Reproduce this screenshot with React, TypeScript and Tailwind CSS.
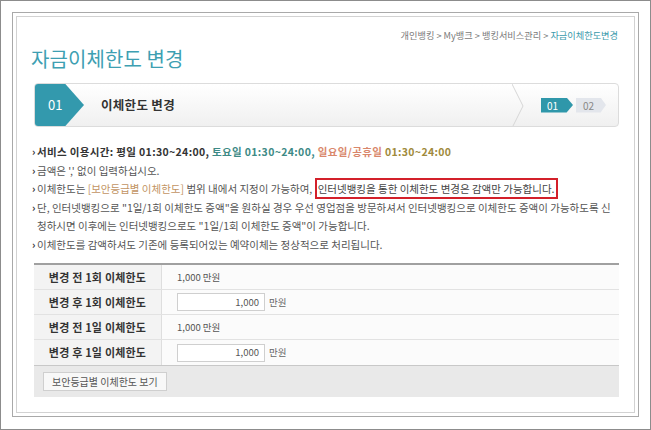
import React from "react";

const font = { fontFamily: "'Noto Sans CJK KR', 'Noto Sans', sans-serif" };

function Bullet({ children, className = "" }: { children: React.ReactNode; className?: string }) {
  return (
    <div className={"flex " + className}>
      <span className="w-[5px] shrink-0 text-[#333] font-bold">›</span>
      <div className="flex-1">{children}</div>
    </div>
  );
}

function Row({ label, children, last = false }: { label: string; children: React.ReactNode; last?: boolean }) {
  return (
    <div className={"flex h-[25px] " + (last ? "" : "border-b border-[#e2e2e2]")}>
      <div className="w-[128px] shrink-0 bg-[#f3f3f3] border-r border-[#dedede] flex items-center justify-center text-[11px] font-bold text-[#333] tracking-[0.2px]">
        {label}
      </div>
      <div className="flex-1 bg-[#fbfbfb] flex items-center pl-[15px] text-[9.5px] text-[#555]">{children}</div>
    </div>
  );
}

function InputCell() {
  return (
    <div className="flex items-center">
      <div className="w-[88px] h-[18px] border border-[#cfcfcf] bg-white flex items-center justify-end pr-[5px] text-[9.5px] text-[#555]">
        1,000
      </div>
      <span className="ml-[4px] text-[9.5px] text-[#666]">만원</span>
    </div>
  );
}

export default function App() {
  return (
    <div style={font} className="w-[651px] h-[430px] bg-white border border-[#8c8c8c] p-[11px]">
      <div className="h-[405px] border border-[#a9a9a9] p-[3px]">
        <div className="h-[397px] border border-[#d2d2d2] pl-[17px] pr-[15px] pt-[12px]">
          <div className="text-right text-[9.2px] leading-[12px] text-[#7a7a7a] pr-[1px]">
            개인뱅킹 &gt; My뱅크 &gt; 뱅킹서비스관리 &gt; <span className="text-[#3a9aab]">자금이체한도변경</span>
          </div>
          <div className="mt-[6px] ml-[-3px] text-[20px] leading-[24px] text-[#3e9fb2] tracking-[0.1px]">자금이체한도 변경</div>

          <div className="mt-[12px] h-[44px] rounded-[4px] border border-[#dcdcdc] bg-gradient-to-b from-[#ffffff] to-[#f0f0f0] flex items-stretch overflow-hidden">
            <div className="w-[49px] shrink-0 bg-[#3399ad] [clip-path:polygon(0_0,62%_0,100%_50%,62%_100%,0_100%)] flex items-center pl-[13px] text-white text-[13px]">
              01
            </div>
            <div className="flex-1 flex items-center pl-[17px] font-bold text-[12.5px] text-[#333] tracking-[0.3px]">이체한도 변경</div>
            <svg width="12" height="44" viewBox="0 0 12 44" className="shrink-0">
              <polyline points="0,0 11,22 0,44" stroke="#d6d6d6" strokeWidth="1" fill="none" />
            </svg>
            <div className="w-[94px] shrink-0 flex items-center pl-[17px]">
              <div className="w-[32px] h-[15px] bg-[#2f97aa] [clip-path:polygon(0_0,80%_0,100%_50%,80%_100%,0_100%)] flex items-center pl-[6px] text-[10px] text-white">
                01
              </div>
              <div className="ml-[3px] w-[30px] h-[15px] bg-[#e3e6ec] [clip-path:polygon(0_0,82%_0,100%_50%,82%_100%,0_100%)] flex items-center pl-[7px] text-[10px] text-[#888]">
                02
              </div>
            </div>
          </div>

          <div className="mt-[16px] text-[10.5px] leading-[18.5px] text-[#555] ml-[-2px]">
            <Bullet>
              <span className="font-bold tracking-[0.35px]">
                <span className="text-[#333]">서비스 이용시간: 평일 01:30~24:00, </span>
                <span className="text-[#3d8a86]">토요일 01:30~24:00, </span>
                <span className="text-[#d9876b]">일요일/공휴일 </span>
                <span className="text-[#a08a3c]">01:30~24:00</span>
              </span>
            </Bullet>
            <Bullet>금액은 ',' 없이 입력하십시오.</Bullet>
            <Bullet>
              이체한도는 <span className="text-[#c29463]">[보안등급별 이체한도]</span> 범위 내에서 지정이 가능하여,{" "}
              <span className="border-2 border-[#d3202a] px-[1px] py-[1px] text-[#444]">인터넷뱅킹을 통한 이체한도 변경은 감액만 가능합니다.</span>
            </Bullet>
            <Bullet>
              단, 인터넷뱅킹으로 "1일/1회 이체한도 증액"을 원하실 경우 우선 영업점을 방문하셔서 인터넷뱅킹으로 이체한도 증액이 가능하도록 신청하시면 이후에는 인터넷뱅킹으로도 "1일/1회 이체한도 증액"이 가능합니다.
            </Bullet>
            <Bullet>이체한도를 감액하셔도 기존에 등록되어있는 예약이체는 정상적으로 처리됩니다.</Bullet>
          </div>

          <div className="mt-[9px] border-t-2 border-[#a0a0a0]">
            <Row label="변경 전 1회 이체한도">1,000 만원</Row>
            <Row label="변경 후 1회 이체한도">
              <InputCell />
            </Row>
            <Row label="변경 전 1일 이체한도">1,000 만원</Row>
            <Row label="변경 후 1일 이체한도" last>
              <InputCell />
            </Row>
            <div className="h-[32px] bg-[#e9e9e9] border-t border-[#c8c8c8] flex items-center pl-[9px]">
              <div className="h-[19px] px-[8px] bg-[#f8f8f8] border border-[#cfcfcf] flex items-center text-[10px] text-[#555]">
                보안등급별 이체한도 보기
              </div>
            </div>
          </div>
        </div>
      </div>
    </div>
  );
}
